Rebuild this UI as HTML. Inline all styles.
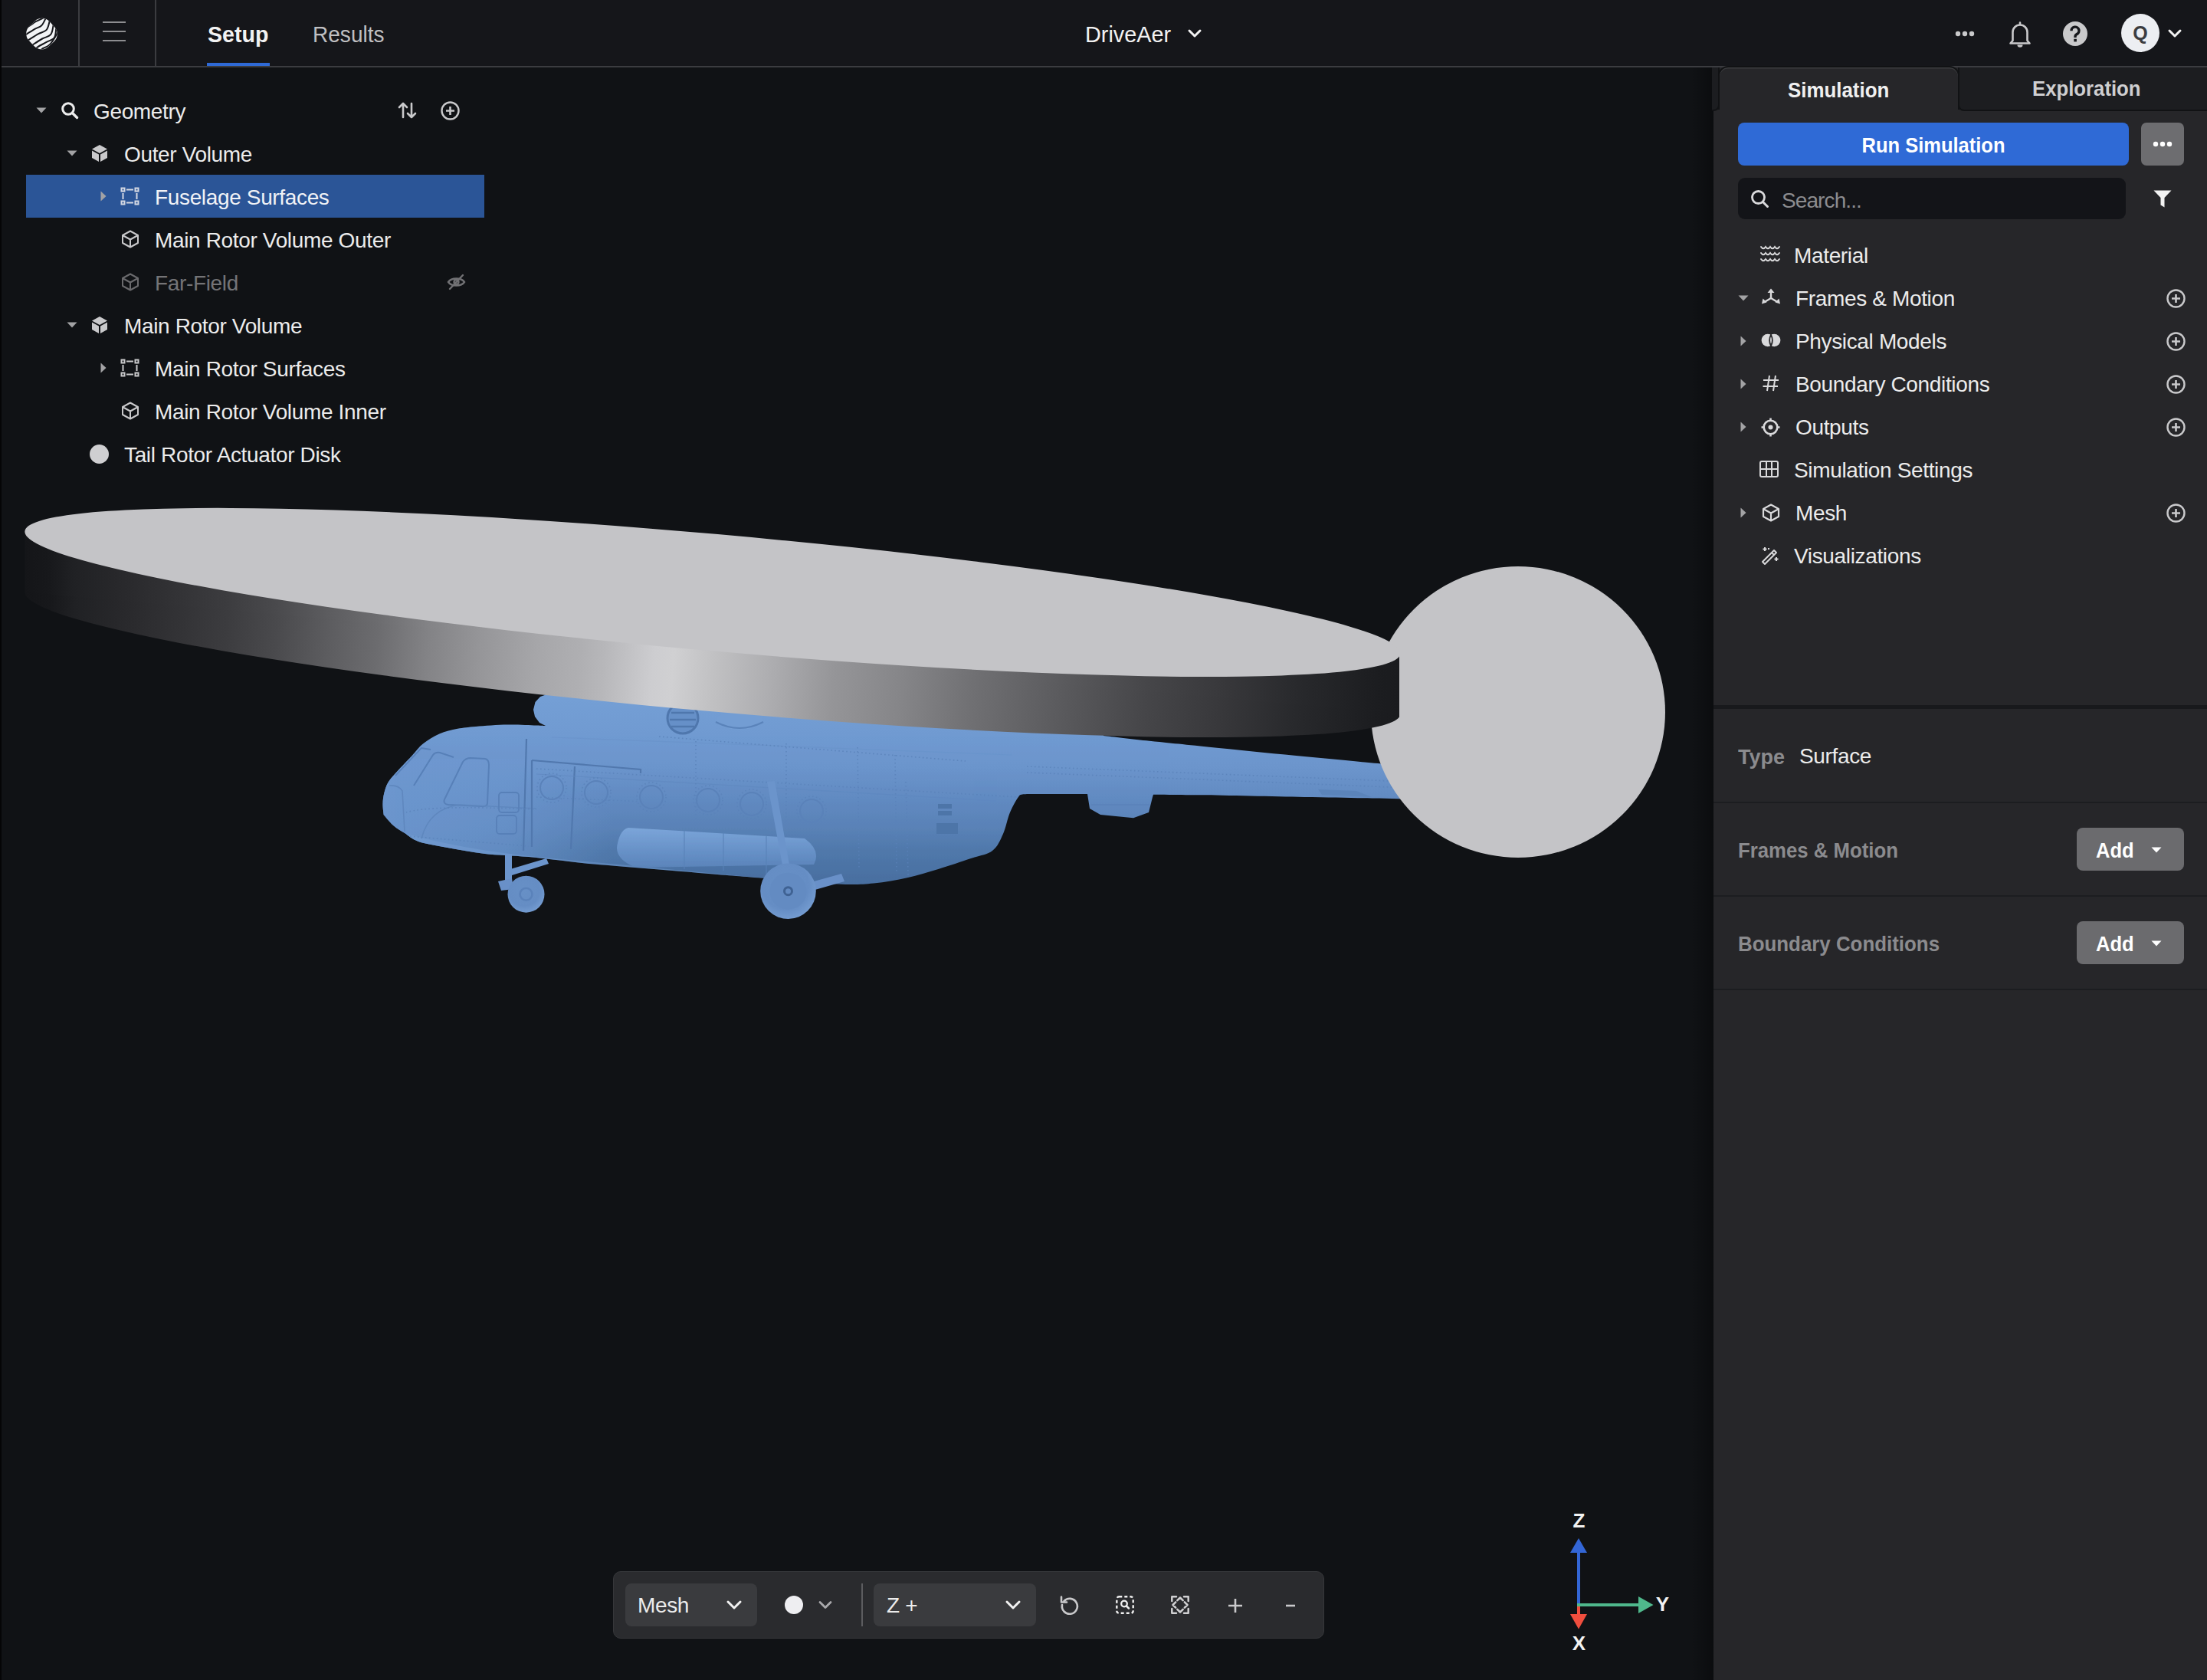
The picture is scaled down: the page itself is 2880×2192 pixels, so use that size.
<!DOCTYPE html>
<html><head><meta charset="utf-8">
<style>
*{box-sizing:border-box;margin:0;padding:0}
html,body{width:2880px;height:2192px;overflow:hidden;background:#101215;font-family:"Liberation Sans",sans-serif;color:#ececec}
.a{position:absolute}
.t{position:absolute;font-size:28px;line-height:56px;height:56px;white-space:nowrap;letter-spacing:-0.35px}
.b{font-weight:700;font-size:28px;letter-spacing:0;transform-origin:0 50%}
svg{overflow:visible}
</style></head><body>

<!-- ============ 3D SCENE ============ -->
<svg class="a" style="left:0;top:0" width="2236" height="2192" id="scene"><defs>
<linearGradient id="sideg" gradientUnits="userSpaceOnUse" x1="31" y1="0" x2="1826" y2="0"><stop offset="0.0000" stop-color="#141518"/><stop offset="0.0178" stop-color="#17181b"/><stop offset="0.0362" stop-color="#202124"/><stop offset="0.0730" stop-color="#29292c"/><stop offset="0.1097" stop-color="#323235"/><stop offset="0.1471" stop-color="#3c3c3f"/><stop offset="0.1838" stop-color="#4a4a4d"/><stop offset="0.2206" stop-color="#5c5c5f"/><stop offset="0.2574" stop-color="#6c6c6f"/><stop offset="0.2942" stop-color="#838386"/><stop offset="0.3309" stop-color="#959598"/><stop offset="0.3727" stop-color="#a6a6a9"/><stop offset="0.4050" stop-color="#afafb2"/><stop offset="0.4228" stop-color="#b7b7ba"/><stop offset="0.4585" stop-color="#cdcdd0"/><stop offset="0.4730" stop-color="#d0d0d2"/><stop offset="0.5036" stop-color="#c0c0c2"/><stop offset="0.5443" stop-color="#adadb0"/><stop offset="0.5900" stop-color="#959598"/><stop offset="0.6407" stop-color="#858588"/><stop offset="0.6914" stop-color="#707073"/><stop offset="0.7627" stop-color="#58585b"/><stop offset="0.8167" stop-color="#464649"/><stop offset="0.8719" stop-color="#38383b"/><stop offset="0.9270" stop-color="#28292c"/><stop offset="0.9827" stop-color="#1c1d20"/><stop offset="1.0000" stop-color="#1a1b1e"/></linearGradient>
<linearGradient id="helig" gradientUnits="userSpaceOnUse" x1="0" y1="900" x2="0" y2="1160"><stop offset="0" stop-color="#7ba4df"/><stop offset="0.55" stop-color="#6f99d6"/><stop offset="1" stop-color="#5b84c1"/></linearGradient>
<linearGradient id="wheelg" gradientUnits="userSpaceOnUse" x1="0" y1="1120" x2="0" y2="1200"><stop offset="0" stop-color="#6a93cf"/><stop offset="1" stop-color="#5880bd"/></linearGradient>
<clipPath id="diskclip"><rect x="0" y="0" width="1826" height="1200"/></clipPath>
</defs>
<defs>
<linearGradient id="hg" gradientUnits="userSpaceOnUse" x1="0" y1="900" x2="0" y2="1155">
<stop offset="0" stop-color="#75a0d6"/><stop offset="0.235" stop-color="#709ad1"/><stop offset="0.392" stop-color="#6c95cc"/><stop offset="0.549" stop-color="#628bc2"/><stop offset="0.706" stop-color="#5a82b7"/><stop offset="0.824" stop-color="#5079ab"/><stop offset="1" stop-color="#486e9f"/></linearGradient>
<linearGradient id="hgn" gradientUnits="userSpaceOnUse" x1="490" y1="0" x2="800" y2="0">
<stop offset="0" stop-color="#6e98d0" stop-opacity="1"/><stop offset="0.55" stop-color="#6e98d0" stop-opacity="0.7"/><stop offset="1" stop-color="#6e98d0" stop-opacity="0"/></linearGradient>
<linearGradient id="tankg" gradientUnits="userSpaceOnUse" x1="0" y1="1080" x2="0" y2="1135">
<stop offset="0" stop-color="#7ca5d9"/><stop offset="0.6" stop-color="#6690c6"/><stop offset="1" stop-color="#5a82b8"/></linearGradient>
<radialGradient id="wg" cx="0.45" cy="0.4" r="0.6"><stop offset="0" stop-color="#6790c6"/><stop offset="0.7" stop-color="#658dc4"/><stop offset="1" stop-color="#739bd0"/></radialGradient>
<clipPath id="hclip"><path d="M500.7 1063.3 C500.5 1060.9 499.4 1053.8 499.5 1049.0 C499.6 1044.2 500.1 1039.5 501.3 1034.8 C502.5 1030.0 503.8 1025.3 506.7 1020.5 C509.6 1015.7 513.5 1012.0 518.6 1006.2 C523.8 1000.5 532.1 992.0 537.6 986.0 C543.1 980.0 546.0 975.3 551.9 970.5 C557.8 965.7 565.8 960.7 573.3 957.4 C580.8 954.1 589.1 952.4 597.1 950.8 C605.1 949.2 610.1 948.8 621.0 947.9 C631.9 947.0 649.4 945.7 662.6 945.5 C675.8 945.3 691.8 946.2 700.0 946.5 C708.2 946.8 710.0 946.9 712.0 947.0 L704.0 943.0 L698.0 935.0 L696.0 926.0 L698.5 916.0 L705.0 909.0 L715.0 905.5 L730.0 902.0 L760.0 898.0 L1100.0 905.0 L1440.0 940.0 L1440.0 960.0 C1450.0 961.1 1479.0 964.6 1500.0 966.8 C1521.0 969.0 1536.8 970.4 1566.3 973.4 C1595.8 976.4 1638.1 980.7 1676.7 984.5 C1715.3 988.3 1768.8 993.4 1797.7 996.0 C1826.6 998.6 1841.3 999.3 1850.0 1000.0 L1850.0 1043.0 L1800.0 1041.6 C1783.7 1041.3 1741.2 1040.7 1702.2 1040.0 C1663.2 1039.3 1599.2 1037.8 1566.3 1037.3 C1533.4 1036.8 1515.2 1036.9 1505.0 1036.8 L1504.0 1040.0 L1499.0 1060.0 L1479.0 1067.2 L1436.0 1063.0 L1422.0 1055.0 L1419.0 1036.0 C1335.0 1036.5 1332.7 1034.7 1329.7 1038.7 C1326.7 1042.7 1321.5 1051.8 1318.0 1060.0 C1314.5 1068.2 1312.8 1079.7 1309.0 1088.0 C1305.2 1096.3 1302.0 1104.7 1295.0 1110.0 C1288.0 1115.3 1278.8 1116.0 1267.0 1120.0 C1255.2 1124.0 1238.2 1129.8 1224.4 1134.0 C1210.6 1138.2 1198.0 1142.1 1183.9 1145.2 C1169.8 1148.3 1155.2 1151.1 1140.0 1152.5 C1124.8 1153.9 1117.0 1154.7 1093.0 1153.6 C1069.0 1152.5 1025.9 1148.2 995.7 1145.7 C965.5 1143.2 948.5 1141.9 911.9 1138.9 C875.3 1135.9 813.0 1131.1 776.0 1127.6 C739.0 1124.1 713.9 1120.4 690.0 1118.1 C666.1 1115.8 650.4 1115.9 632.9 1113.9 C615.4 1111.9 599.7 1108.9 585.2 1106.2 C570.7 1103.5 555.5 1101.1 546.0 1097.9 C536.5 1094.7 533.5 1090.5 528.1 1087.1 C522.7 1083.7 518.4 1081.6 513.8 1077.6 C509.2 1073.6 502.9 1065.7 500.7 1063.3 Z"/></clipPath>
</defs>
<path d="M500.7 1063.3 C500.5 1060.9 499.4 1053.8 499.5 1049.0 C499.6 1044.2 500.1 1039.5 501.3 1034.8 C502.5 1030.0 503.8 1025.3 506.7 1020.5 C509.6 1015.7 513.5 1012.0 518.6 1006.2 C523.8 1000.5 532.1 992.0 537.6 986.0 C543.1 980.0 546.0 975.3 551.9 970.5 C557.8 965.7 565.8 960.7 573.3 957.4 C580.8 954.1 589.1 952.4 597.1 950.8 C605.1 949.2 610.1 948.8 621.0 947.9 C631.9 947.0 649.4 945.7 662.6 945.5 C675.8 945.3 691.8 946.2 700.0 946.5 C708.2 946.8 710.0 946.9 712.0 947.0 L704.0 943.0 L698.0 935.0 L696.0 926.0 L698.5 916.0 L705.0 909.0 L715.0 905.5 L730.0 902.0 L760.0 898.0 L1100.0 905.0 L1440.0 940.0 L1440.0 960.0 C1450.0 961.1 1479.0 964.6 1500.0 966.8 C1521.0 969.0 1536.8 970.4 1566.3 973.4 C1595.8 976.4 1638.1 980.7 1676.7 984.5 C1715.3 988.3 1768.8 993.4 1797.7 996.0 C1826.6 998.6 1841.3 999.3 1850.0 1000.0 L1850.0 1043.0 L1800.0 1041.6 C1783.7 1041.3 1741.2 1040.7 1702.2 1040.0 C1663.2 1039.3 1599.2 1037.8 1566.3 1037.3 C1533.4 1036.8 1515.2 1036.9 1505.0 1036.8 L1504.0 1040.0 L1499.0 1060.0 L1479.0 1067.2 L1436.0 1063.0 L1422.0 1055.0 L1419.0 1036.0 C1335.0 1036.5 1332.7 1034.7 1329.7 1038.7 C1326.7 1042.7 1321.5 1051.8 1318.0 1060.0 C1314.5 1068.2 1312.8 1079.7 1309.0 1088.0 C1305.2 1096.3 1302.0 1104.7 1295.0 1110.0 C1288.0 1115.3 1278.8 1116.0 1267.0 1120.0 C1255.2 1124.0 1238.2 1129.8 1224.4 1134.0 C1210.6 1138.2 1198.0 1142.1 1183.9 1145.2 C1169.8 1148.3 1155.2 1151.1 1140.0 1152.5 C1124.8 1153.9 1117.0 1154.7 1093.0 1153.6 C1069.0 1152.5 1025.9 1148.2 995.7 1145.7 C965.5 1143.2 948.5 1141.9 911.9 1138.9 C875.3 1135.9 813.0 1131.1 776.0 1127.6 C739.0 1124.1 713.9 1120.4 690.0 1118.1 C666.1 1115.8 650.4 1115.9 632.9 1113.9 C615.4 1111.9 599.7 1108.9 585.2 1106.2 C570.7 1103.5 555.5 1101.1 546.0 1097.9 C536.5 1094.7 533.5 1090.5 528.1 1087.1 C522.7 1083.7 518.4 1081.6 513.8 1077.6 C509.2 1073.6 502.9 1065.7 500.7 1063.3 Z" fill="url(#hg)"/>
<g clip-path="url(#hclip)">
<path d="M490 990 H800 V1130 H490 Z" fill="url(#hgn)" opacity="0.85"/>
<!-- underside highlight -->
<path d="M520 1085 Q600 1108 700 1118 L1000 1146 L1000 1156 L520 1110 Z" fill="#7ea7da" opacity="0.35"/>
<!-- fuel tank -->
<path d="M820 1080 L1050 1094 Q1072 1110 1062 1128 L830 1132 Q800 1120 806 1100 Q810 1082 820 1080 Z" fill="url(#tankg)"/>
<path d="M893 1082 V1134 M944 1086 V1136 M1000 1090 V1140" stroke="#5a82b8" stroke-width="1.5" opacity="0.7"/>
<!-- windows -->
<path d="M580 1043 L604 994 Q608 989 614 989 L633 990 Q638 991 638 998 L636 1048 Q636 1052 630 1052 L585 1050 Q578 1049 580 1043 Z" fill="none" stroke="#5880b8" stroke-width="2"/>
<path d="M540 1025 L565 985 Q568 981 574 982 L592 988" fill="none" stroke="#5880b8" stroke-width="2"/>
<path d="M516 1012 L550 976 L562 978" fill="none" stroke="#5880b8" stroke-width="1.8"/>
<path d="M508 1025 Q520 1024 525 1032 L528 1085" fill="none" stroke="#5f88bf" stroke-width="1.6"/>
<path d="M550 1094 Q560 1055 600 1050 L700 1055" fill="none" stroke="#5f88bf" stroke-width="1.6"/>
<!-- small hatches -->
<rect x="651" y="1034" width="26" height="26" rx="4" fill="none" stroke="#5880b8" stroke-width="1.8"/>
<rect x="648" y="1064" width="26" height="24" rx="4" fill="none" stroke="#5880b8" stroke-width="1.8"/>
<!-- door and panel lines -->
<path d="M687 964 L683 1110 M694 992 L694 1105 M694 992 L836 1004 L836 1009 M750 1000 L745 1108" fill="none" stroke="#5279ae" stroke-width="2.2"/>
<!-- portholes -->
<circle cx="720" cy="1028" r="15" fill="none" stroke="#5a82ba" stroke-width="2"/>
<circle cx="778" cy="1034" r="15" fill="none" stroke="#5a82ba" stroke-width="2"/>
<circle cx="850" cy="1040" r="15" fill="none" stroke="#5a82ba" stroke-width="2"/>
<circle cx="924" cy="1044" r="15" fill="none" stroke="#5a82ba" stroke-width="2"/>
<circle cx="981" cy="1049" r="15" fill="none" stroke="#5a82ba" stroke-width="2"/>
<circle cx="1059" cy="1058" r="15" fill="none" stroke="#5a82ba" stroke-width="2"/>
<!-- engine vent -->
<circle cx="891" cy="937" r="20" fill="#6690c8" stroke="#4f77ad" stroke-width="3"/>
<path d="M876 930 H906 M874 939 H908 M876 948 H906" stroke="#4f77ad" stroke-width="2.6"/>
<ellipse cx="965" cy="940" rx="31" ry="12" fill="#739dd3"/>
<path d="M934 942 Q965 958 996 942" fill="none" stroke="#5a83ba" stroke-width="2"/>
<!-- panel line along body -->
<path d="M700 1010 L1300 1045" stroke="#6089c0" stroke-width="1.2" opacity="0.7"/>
<path d="M720 962 L1320 985" stroke="#6a93ca" stroke-width="1.2" opacity="0.6"/>
<!-- rear grille -->
<path d="M1222 1074 h28 v14 h-28 z" fill="#4e76a8"/>
<path d="M1224 1049 h18 v6 h-18 z M1224 1058 h18 v6 h-18 z" fill="#4e76a8"/>
<!-- rivet seams -->
<g fill="none" stroke="#5a82b9" stroke-width="1.6" stroke-dasharray="1.6 3.4" opacity="0.8">
<path d="M700 1003 L1260 1036 L1330 1040"/>
<path d="M860 961 L1260 993"/>
<path d="M908 967 V1082 M1026 970 V1090 M1119 975 L1121 1135 M1168 985 L1170 1140 M1182 1020 L1185 1142"/>
<path d="M700 1040 L840 1046 M530 1060 Q560 1050 700 1056 M520 1090 L690 1104"/>
<path d="M1340 1000 L1840 1020 M1340 1008 L1840 1028"/>
<circle cx="720" cy="1028" r="19"/><circle cx="778" cy="1034" r="19"/><circle cx="850" cy="1040" r="19"/><circle cx="924" cy="1044" r="19"/><circle cx="981" cy="1049" r="19"/><circle cx="1059" cy="1058" r="19"/>
</g>
<!-- boom light stripe -->

<path d="M1720 1030 L1770 1032 L1790 1040 L1725 1037 Z" fill="#5b84ba"/>
</g>
<!-- nose gear -->
<path d="M659 1114 H668 V1160 H659 Z" fill="#6c95cc"/>
<path d="M666 1134 L713 1120 L716 1127 L668 1142 Z" fill="#6c95cc"/>
<path d="M650 1150 L668 1146 L670 1160 L654 1162 Z" fill="#6990c8"/>
<circle cx="686.5" cy="1166.7" r="24" fill="url(#wg)"/>
<circle cx="686.5" cy="1166.7" r="8" fill="none" stroke="#5a82ba" stroke-width="2.5"/>
<!-- main gear -->
<path d="M1001 1020 L1011 1019 L1030 1128 L1021 1129 Z" fill="#6b94cb"/>
<path d="M1055 1152 L1098 1140 L1102 1150 L1060 1162 Z" fill="#6990c8"/>
<circle cx="1028.5" cy="1162.7" r="36.3" fill="url(#wg)"/>
<circle cx="1028.5" cy="1162.7" r="24" fill="#638bc2"/>
<circle cx="1028.5" cy="1162.7" r="5" fill="none" stroke="#3f6293" stroke-width="3"/>
<!-- housing under boom -->
<path d="M1424 1050 L1500 1050" stroke="#5a82ba" stroke-width="1.5"/>

<ellipse cx="1981" cy="929" rx="192" ry="190" fill="#c4c4c7"/>
<g clip-path="url(#diskclip)">
<ellipse cx="929.97" cy="851.96" rx="901.12" ry="76.17" transform="rotate(5.080 929.97 851.96)" fill="url(#sideg)"/>
<path d="M32.4 693.8 L1827.6 852.3 L1827.6 931.3 L32.4 772.8 Z" fill="url(#sideg)"/>
<ellipse cx="929.97" cy="772.96" rx="901.12" ry="76.17" transform="rotate(5.080 929.97 772.96)" fill="#c4c4c7"/>
</g>
</svg>

<!-- ============ HEADER ============ -->
<div class="a" style="left:0;top:0;width:2880px;height:88px;background:#15161a;border-bottom:2px solid #3b3c40"></div>
<div class="a" style="left:102px;top:0;width:2px;height:86px;background:#3b3c40"></div>
<div class="a" style="left:202px;top:0;width:2px;height:86px;background:#3b3c40"></div>
<!-- logo -->
<svg class="a" style="left:33px;top:24px" width="42" height="40" viewBox="0 0 42 40" id="logo"><defs><clipPath id="lc"><rect x="3.2" y="1.8" width="36.6" height="36.6" rx="13.5" transform="rotate(47 21.5 20.1)"/></clipPath></defs>
<g clip-path="url(#lc)"><rect x="-5" y="-5" width="52" height="52" fill="#f2f3f5"/>
<g fill="none" stroke="#16171b" stroke-width="2" stroke-linecap="round"><path d="M0.0 13.0 C1.2 12.3 4.8 10.1 7.1 8.6 C9.4 7.1 11.1 5.6 13.6 4.2 C16.1 2.8 20.1 1.2 22.2 0.2 C24.3 -0.8 25.4 -1.6 26.0 -2.0"/><path d="M-2.0 23.0 C-1.3 22.6 -0.3 21.8 2.1 20.3 C4.5 18.8 9.2 15.6 12.3 13.8 C15.5 12.0 18.7 11.6 21.0 9.5 C23.3 7.4 25.0 3.2 26.0 1.1 C27.0 -1.0 26.8 -2.3 27.0 -3.0"/><path d="M1.0 30.0 C1.8 29.5 3.2 28.7 5.8 27.1 C8.4 25.5 13.1 22.3 16.7 20.3 C20.3 18.3 25.0 17.8 27.5 15.1 C30.0 12.4 30.8 6.9 31.5 4.2 C32.2 1.5 31.9 -0.1 32.0 -1.0"/><path d="M6.0 37.0 C6.8 36.5 7.8 35.6 10.5 33.9 C13.2 32.1 18.4 28.6 22.2 26.5 C26.0 24.4 30.7 24.0 33.1 21.2 C35.5 18.4 35.9 12.4 36.5 9.5 C37.1 6.6 36.9 4.9 37.0 4.0"/><path d="M12.0 41.0 C12.7 40.4 13.6 38.9 16.1 37.3 C18.6 35.7 23.6 33.2 27.2 31.2 C30.8 29.2 35.5 28.2 37.7 25.3 C39.9 22.4 39.7 16.7 40.2 13.8 C40.8 10.9 40.9 9.0 41.0 8.0"/><path d="M19.0 43.0 C19.6 42.4 20.7 40.7 22.9 39.2 C25.1 37.7 29.1 37.2 32.2 33.9 C35.3 30.6 39.9 22.7 41.7 19.4 C43.5 16.1 42.8 14.9 43.0 14.0"/></g></g></svg>
<!-- hamburger -->
<div class="a" style="left:134px;top:28px;width:30px;height:2px;background:#8d8d90"></div>
<div class="a" style="left:134px;top:40px;width:30px;height:2px;background:#8d8d90"></div>
<div class="a" style="left:134px;top:52px;width:30px;height:2px;background:#8d8d90"></div>
<!-- tabs -->
<div class="t b" style="left:271px;top:16.5px;font-size:30px;transform:scaleX(0.953);color:#f2f2f2">Setup</div>
<div class="a" style="left:270px;top:82px;width:82px;height:4px;background:#2f6ad6"></div>
<div class="t" style="left:408px;top:16.5px;font-size:30px;letter-spacing:0;transform:scaleX(0.935);transform-origin:0 50%;color:#bfbfc1">Results</div>
<!-- title -->
<div class="t" style="left:1416px;top:16.5px;font-size:30px;letter-spacing:0;transform:scaleX(0.96);transform-origin:0 50%;color:#f2f2f2">DriveAer</div>

<svg class="a" style="left:1548px;top:36px" width="22" height="16" viewBox="0 0 22 16"><path d="M4 4 L11 11 L18 4" fill="none" stroke="#f2f2f2" stroke-width="3" stroke-linecap="round" stroke-linejoin="round"/></svg>
<!-- right header icons -->
<svg class="a" style="left:2548px;top:36px" width="32" height="16"><circle cx="7" cy="8" r="3.2" fill="#c9c9cb"/><circle cx="16" cy="8" r="3.2" fill="#c9c9cb"/><circle cx="25" cy="8" r="3.2" fill="#c9c9cb"/></svg>
<svg class="a" style="left:2620px;top:27px" width="32" height="35" viewBox="0 0 32 35"><path d="M16 2.5 v2.5 M6.5 26 V15 a9.5 9.5 0 0 1 19 0 V26 l3 3.5 H3.5 z" fill="none" stroke="#c9c9cb" stroke-width="2.6" stroke-linejoin="round" stroke-linecap="round"/><path d="M12.5 31.5 a3.5 3.2 0 0 0 7 0 z" fill="#c9c9cb"/></svg>
<svg class="a" style="left:2692px;top:28px" width="32" height="32" viewBox="0 0 32 32"><circle cx="16" cy="16" r="16" fill="#c9c9cb"/><path d="M11 12.2 a5 5 0 1 1 7.2 4.4 c-1.6 0.9-2.2 1.6-2.2 3.4 v1" fill="none" stroke="#16171b" stroke-width="3.4"/><rect x="14.3" y="22.8" width="3.6" height="3.6" fill="#16171b"/></svg>
<div class="a" style="left:2768px;top:18px;width:50px;height:50px;border-radius:50%;background:#eceef2"></div>
<div class="a" style="left:2768px;top:18px;width:50px;height:50px;line-height:50px;text-align:center;font-weight:700;font-size:25px;color:#3b3c40">Q</div>
<svg class="a" style="left:2827px;top:35px" width="22" height="18" viewBox="0 0 22 18"><path d="M4 5 L11 12 L18 5" fill="none" stroke="#f2f2f2" stroke-width="3" stroke-linecap="round" stroke-linejoin="round"/></svg>

<!-- ============ LEFT TREE ============ -->
<div class="a" style="left:34px;top:228px;width:598px;height:56px;background:#2b5597"></div>
<svg class="a" style="left:47px;top:139px" width="14" height="10" viewBox="0 0 14 10"><path d="M0.5 1.5 H13.5 L7 8.5 Z" fill="#a3a3a5"/></svg>
<svg class="a" style="left:79px;top:132px" width="24" height="24" viewBox="0 0 24 24"><circle cx="10" cy="10" r="7.3" fill="none" stroke="#ececec" stroke-width="3"/><path d="M15.5 15.5 L21.5 21.5" stroke="#ececec" stroke-width="3.4" stroke-linecap="round"/></svg>
<div class="t" style="left:122px;top:118px;color:#ececec;">Geometry</div>
<svg class="a" style="left:519px;top:132px" width="25" height="24" viewBox="0 0 25 24"><g fill="none" stroke="#c9c9cb" stroke-width="2.6" stroke-linecap="round" stroke-linejoin="round"><path d="M7 21 V3 M2 8 L7 3 L12 8"/><path d="M18 3 V21 M13 16 L18 21 L23 16"/></g></svg>
<svg class="a" style="left:575px;top:131.5px" width="25" height="25" viewBox="0 0 25 25"><circle cx="12.5" cy="12.5" r="11" fill="none" stroke="#c9c9cb" stroke-width="2.4"/><path d="M12.5 7 V18 M7 12.5 H18" stroke="#c9c9cb" stroke-width="2.6"/></svg>
<svg class="a" style="left:87px;top:195px" width="14" height="10" viewBox="0 0 14 10"><path d="M0.5 1.5 H13.5 L7 8.5 Z" fill="#a3a3a5"/></svg>
<svg class="a" style="left:119px;top:188px" width="22" height="24" viewBox="0 0 22 24"><path d="M11 1 L21 6.5 L11 12 L1 6.5 Z" fill="#c9c9cb"/><path d="M1 8.5 L10 13.5 V23 L1 18 Z" fill="#c9c9cb"/><path d="M21 8.5 L12 13.5 V23 L21 18 Z" fill="#c9c9cb"/></svg>
<div class="t" style="left:162px;top:174px;color:#ececec;">Outer Volume</div>
<svg class="a" style="left:130px;top:249px" width="10" height="14" viewBox="0 0 10 14"><path d="M1.5 0.5 V13.5 L8.5 7 Z" fill="#a3a3a5"/></svg>
<svg class="a" style="left:157px;top:244px" width="25" height="24" viewBox="0 0 25 24"><g fill="none" stroke="#d5d9e3" stroke-width="2"><rect x="1.5" y="1.5" width="4" height="4"/><rect x="19.5" y="1.5" width="4" height="4"/><rect x="1.5" y="18.5" width="4" height="4"/><rect x="19.5" y="18.5" width="4" height="4"/><path d="M8 3.5 H17 M8 20.5 H17 M3.5 8 V16 M21.5 8 V16"/></g></svg>
<div class="t" style="left:202px;top:230px;color:#f0f2f6;">Fuselage Surfaces</div>
<svg class="a" style="left:158px;top:300px" width="24" height="24" viewBox="0 0 24 24"><path d="M12 1.5 L22 7 V17 L12 22.5 L2 17 V7 Z M2 7 L12 12.5 L22 7 M12 12.5 V22.5" fill="none" stroke="#c9c9cb" stroke-width="2" stroke-linejoin="round"/></svg>
<div class="t" style="left:202px;top:286px;color:#ececec;">Main Rotor Volume Outer</div>
<svg class="a" style="left:158px;top:356px" width="24" height="24" viewBox="0 0 24 24"><path d="M12 1.5 L22 7 V17 L12 22.5 L2 17 V7 Z M2 7 L12 12.5 L22 7 M12 12.5 V22.5" fill="none" stroke="#6a6a6d" stroke-width="2" stroke-linejoin="round"/></svg>
<div class="t" style="left:202px;top:342px;color:#747477;">Far-Field</div>
<svg class="a" style="left:583px;top:356px" width="25" height="24" viewBox="0 0 25 24"><g fill="none" stroke="#717174" stroke-width="2.4" stroke-linecap="round"><path d="M2 12 C6 6,19 6,23 12 C19 18,6 18,2 12 Z"/><circle cx="12.5" cy="12" r="3"/><path d="M4 21 L21 3"/></g></svg>
<svg class="a" style="left:87px;top:419px" width="14" height="10" viewBox="0 0 14 10"><path d="M0.5 1.5 H13.5 L7 8.5 Z" fill="#a3a3a5"/></svg>
<svg class="a" style="left:119px;top:412px" width="22" height="24" viewBox="0 0 22 24"><path d="M11 1 L21 6.5 L11 12 L1 6.5 Z" fill="#c9c9cb"/><path d="M1 8.5 L10 13.5 V23 L1 18 Z" fill="#c9c9cb"/><path d="M21 8.5 L12 13.5 V23 L21 18 Z" fill="#c9c9cb"/></svg>
<div class="t" style="left:162px;top:398px;color:#ececec;">Main Rotor Volume</div>
<svg class="a" style="left:130px;top:473px" width="10" height="14" viewBox="0 0 10 14"><path d="M1.5 0.5 V13.5 L8.5 7 Z" fill="#a3a3a5"/></svg>
<svg class="a" style="left:157px;top:468px" width="25" height="24" viewBox="0 0 25 24"><g fill="none" stroke="#c9c9cb" stroke-width="2"><rect x="1.5" y="1.5" width="4" height="4"/><rect x="19.5" y="1.5" width="4" height="4"/><rect x="1.5" y="18.5" width="4" height="4"/><rect x="19.5" y="18.5" width="4" height="4"/><path d="M8 3.5 H17 M8 20.5 H17 M3.5 8 V16 M21.5 8 V16"/></g></svg>
<div class="t" style="left:202px;top:454px;color:#ececec;">Main Rotor Surfaces</div>
<svg class="a" style="left:158px;top:524px" width="24" height="24" viewBox="0 0 24 24"><path d="M12 1.5 L22 7 V17 L12 22.5 L2 17 V7 Z M2 7 L12 12.5 L22 7 M12 12.5 V22.5" fill="none" stroke="#c9c9cb" stroke-width="2" stroke-linejoin="round"/></svg>
<div class="t" style="left:202px;top:510px;color:#ececec;">Main Rotor Volume Inner</div>
<div class="a" style="left:117px;top:579.5px;width:25px;height:25px;border-radius:50%;background:#cfcfd1"></div>
<div class="t" style="left:162px;top:566px;color:#ececec;">Tail Rotor Actuator Disk</div>
<!-- ============ RIGHT PANEL ============ -->
<div class="a" style="left:2206px;top:88px;width:30px;height:2104px;background:linear-gradient(90deg,rgba(0,0,0,0),rgba(0,0,0,0.18) 60%,rgba(0,0,0,0.32))"></div>
<div class="a" style="left:2236px;top:88px;width:644px;height:2104px;background:#262629"></div>
<div class="a" style="left:2234px;top:88px;width:10px;height:57px;background:#1c1d20;border:2px solid #111214;border-left:none;border-top:none;border-radius:0 0 8px 0"></div>
<div class="a" style="left:2555px;top:88px;width:330px;height:57px;background:#1c1d20;border:2px solid #111214;border-right:none;border-top:none;border-radius:0 0 0 8px"></div>
<div class="a" style="left:2242px;top:86px;width:315px;height:57px;background:#262629;border:2px solid #111214;border-bottom:none;border-radius:13px 13px 0 0;box-shadow:inset 0 1.5px 0 #3c3d40"></div>
<div class="t b" style="left:2333px;top:90px;transform:scaleX(0.924);color:#f0f0f0;">Simulation</div>
<div class="t b" style="left:2652px;top:88px;transform:scaleX(0.919);color:#cfcfd1;">Exploration</div>
<div class="a" style="left:2268px;top:160px;width:510px;height:56px;background:#2f6ad6;border-radius:8px"></div>
<div class="t b" style="left:2268px;top:162px;width:510px;text-align:center;transform:scaleX(0.911);transform-origin:50% 50%;color:#ffffff">Run Simulation</div>
<div class="a" style="left:2794px;top:160px;width:56px;height:56px;background:#6d6d70;border-radius:7px"></div>
<svg class="a" style="left:2794px;top:160px" width="56" height="56"><circle cx="19" cy="28" r="3.2" fill="#fff"/><circle cx="28" cy="28" r="3.2" fill="#fff"/><circle cx="37" cy="28" r="3.2" fill="#fff"/></svg>
<div class="a" style="left:2268px;top:232px;width:506px;height:54px;background:#131418;border-radius:9px"></div>
<svg class="a" style="left:2284px;top:247px" width="25" height="25" viewBox="0 0 25 25"><circle cx="10.5" cy="10.5" r="8" fill="none" stroke="#d9d9db" stroke-width="2.8"/><path d="M16.5 16.5 L22.5 22.5" stroke="#d9d9db" stroke-width="3" stroke-linecap="round"/></svg>
<div class="t" style="left:2325px;top:234px;color:#8c8c8f;letter-spacing:-0.9px">Search...</div>
<svg class="a" style="left:2810px;top:248px" width="24" height="23" viewBox="0 0 24 23"><path d="M0.5 0.5 H23.5 L14.5 10 V22.5 L9.5 19.5 V10 Z" fill="#f2f2f2"/></svg>
<svg class="a" style="left:2296px;top:320px" width="26" height="24" viewBox="0 0 26 24"><g fill="none" stroke="#d9d9db" stroke-width="2" stroke-linecap="round"><path d="M2 2 q3 4.5 6 0 q3 4.5 6 0 q3 4.5 6 0 q3 4.5 6 0"/><path d="M2 10 q3 4.5 6 0 q3 4.5 6 0 q3 4.5 6 0 q3 4.5 6 0"/><path d="M2 18 q3 4.5 6 0 q3 4.5 6 0 q3 4.5 6 0 q3 4.5 6 0"/></g></svg>
<div class="t" style="left:2341px;top:306px;color:#ececec;">Material</div>
<svg class="a" style="left:2268px;top:384px" width="14" height="10" viewBox="0 0 14 10"><path d="M0.5 1.5 H13.5 L7 8.5 Z" fill="#a3a3a5"/></svg>
<svg class="a" style="left:2298px;top:375px" width="26" height="26" viewBox="0 0 26 26"><g stroke="#d9d9db" stroke-width="2.4"><path d="M13 14 V6"/><path d="M13 14 L5.5 18.5"/><path d="M13 14 L20.5 18.5"/></g><g fill="#d9d9db"><path d="M8.5 7 L13 1.5 L17.5 7 Z"/><path d="M1 21.5 L2.5 14.5 L7.5 19.5 Z"/><path d="M25 21.5 L23.5 14.5 L18.5 19.5 Z"/></g></svg>
<div class="t" style="left:2343px;top:362px;color:#ececec;">Frames &amp; Motion</div>
<svg class="a" style="left:2827px;top:376.5px" width="25" height="25" viewBox="0 0 25 25"><circle cx="12.5" cy="12.5" r="11" fill="none" stroke="#c9c9cb" stroke-width="2.4"/><path d="M12.5 7 V18 M7 12.5 H18" stroke="#c9c9cb" stroke-width="2.6"/></svg>
<svg class="a" style="left:2270px;top:438px" width="10" height="14" viewBox="0 0 10 14"><path d="M1.5 0.5 V13.5 L8.5 7 Z" fill="#a3a3a5"/></svg>
<svg class="a" style="left:2298px;top:435px" width="26" height="18" viewBox="0 0 26 18"><circle cx="8.8" cy="9" r="8.2" fill="#d9d9db"/><circle cx="17.2" cy="9" r="8.2" fill="#d9d9db"/><path d="M13 1.8 Q9.2 9 13 16.2 Q16.8 9 13 1.8 Z" fill="#d9d9db" stroke="#262629" stroke-width="1.8"/></svg>
<div class="t" style="left:2343px;top:418px;color:#ececec;">Physical Models</div>
<svg class="a" style="left:2827px;top:432.5px" width="25" height="25" viewBox="0 0 25 25"><circle cx="12.5" cy="12.5" r="11" fill="none" stroke="#c9c9cb" stroke-width="2.4"/><path d="M12.5 7 V18 M7 12.5 H18" stroke="#c9c9cb" stroke-width="2.6"/></svg>
<svg class="a" style="left:2270px;top:494px" width="10" height="14" viewBox="0 0 10 14"><path d="M1.5 0.5 V13.5 L8.5 7 Z" fill="#a3a3a5"/></svg>
<svg class="a" style="left:2300px;top:489px" width="22" height="22" viewBox="0 0 22 22"><g stroke="#d9d9db" stroke-width="2"><path d="M9 1 L6 21 M17 1 L14 21 M1 7 H21 M0.5 15 H20"/></g></svg>
<div class="t" style="left:2343px;top:474px;color:#ececec;">Boundary Conditions</div>
<svg class="a" style="left:2827px;top:488.5px" width="25" height="25" viewBox="0 0 25 25"><circle cx="12.5" cy="12.5" r="11" fill="none" stroke="#c9c9cb" stroke-width="2.4"/><path d="M12.5 7 V18 M7 12.5 H18" stroke="#c9c9cb" stroke-width="2.6"/></svg>
<svg class="a" style="left:2270px;top:550px" width="10" height="14" viewBox="0 0 10 14"><path d="M1.5 0.5 V13.5 L8.5 7 Z" fill="#a3a3a5"/></svg>
<svg class="a" style="left:2298px;top:545px" width="25" height="25" viewBox="0 0 25 25"><circle cx="12.5" cy="12.5" r="8.8" fill="none" stroke="#d9d9db" stroke-width="2.6"/><circle cx="12.5" cy="12.5" r="3" fill="#d9d9db"/><path d="M12.5 0.5 V4 M12.5 21 V24.5 M0.5 12.5 H4 M21 12.5 H24.5" stroke="#d9d9db" stroke-width="2.6"/></svg>
<div class="t" style="left:2343px;top:530px;color:#ececec;">Outputs</div>
<svg class="a" style="left:2827px;top:544.5px" width="25" height="25" viewBox="0 0 25 25"><circle cx="12.5" cy="12.5" r="11" fill="none" stroke="#c9c9cb" stroke-width="2.4"/><path d="M12.5 7 V18 M7 12.5 H18" stroke="#c9c9cb" stroke-width="2.6"/></svg>
<svg class="a" style="left:2296px;top:601px" width="25" height="22" viewBox="0 0 25 22"><g fill="none" stroke="#d9d9db" stroke-width="2"><rect x="1" y="1" width="23" height="20" rx="2"/><path d="M1 11 H24 M9 1 V21 M16 1 V21"/></g></svg>
<div class="t" style="left:2341px;top:586px;color:#ececec;">Simulation Settings</div>
<svg class="a" style="left:2270px;top:662px" width="10" height="14" viewBox="0 0 10 14"><path d="M1.5 0.5 V13.5 L8.5 7 Z" fill="#a3a3a5"/></svg>
<svg class="a" style="left:2299px;top:657px" width="24" height="24" viewBox="0 0 24 24"><path d="M12 1.5 L22 7 V17 L12 22.5 L2 17 V7 Z M2 7 L12 12.5 L22 7 M12 12.5 V22.5" fill="none" stroke="#d9d9db" stroke-width="2.2" stroke-linejoin="round"/></svg>
<div class="t" style="left:2343px;top:642px;color:#ececec;">Mesh</div>
<svg class="a" style="left:2827px;top:656.5px" width="25" height="25" viewBox="0 0 25 25"><circle cx="12.5" cy="12.5" r="11" fill="none" stroke="#c9c9cb" stroke-width="2.4"/><path d="M12.5 7 V18 M7 12.5 H18" stroke="#c9c9cb" stroke-width="2.6"/></svg>
<svg class="a" style="left:2298px;top:713px" width="24" height="24" viewBox="0 0 24 24"><g fill="none" stroke="#d9d9db" stroke-width="2" stroke-linejoin="round"><path d="M2 20 L17 5 L20 8 L5 23 Z M14 8 L17 11"/><path d="M5 1 V6 M2.5 3.5 H7.5 M20 14 V19 M17.5 16.5 H22.5 M10 2 V4 M9 3 H11"/></g></svg>
<div class="t" style="left:2341px;top:698px;color:#ececec;">Visualizations</div>
<div class="a" style="left:2236px;top:920px;width:644px;height:5px;background:#18191c"></div>
<div class="t b" style="left:2268px;top:960px;transform:scaleX(0.964);color:#8b8b8e;">Type</div>
<div class="t" style="left:2348px;top:959px;color:#ececec;">Surface</div>
<div class="a" style="left:2236px;top:1046px;width:644px;height:2px;background:#1c1d20"></div>
<div class="t b" style="left:2268px;top:1082px;transform:scaleX(0.92);color:#8b8b8e;">Frames &amp; Motion</div>
<div class="a" style="left:2710px;top:1080px;width:140px;height:56px;background:#6b6b6e;border-radius:8px"></div>
<div class="t b" style="left:2735px;top:1082px;transform:scaleX(0.911);color:#ffffff;">Add</div>
<svg class="a" style="left:2807px;top:1104px" width="14" height="10" viewBox="0 0 14 10"><path d="M0.5 1.5 H13.5 L7 8.5 Z" fill="#ffffff"/></svg>
<div class="a" style="left:2236px;top:1168px;width:644px;height:2px;background:#1c1d20"></div>
<div class="t b" style="left:2268px;top:1204px;transform:scaleX(0.924);color:#8b8b8e;">Boundary Conditions</div>
<div class="a" style="left:2710px;top:1202px;width:140px;height:56px;background:#6b6b6e;border-radius:8px"></div>
<div class="t b" style="left:2735px;top:1204px;transform:scaleX(0.911);color:#ffffff;">Add</div>
<svg class="a" style="left:2807px;top:1226px" width="14" height="10" viewBox="0 0 14 10"><path d="M0.5 1.5 H13.5 L7 8.5 Z" fill="#ffffff"/></svg>
<div class="a" style="left:2236px;top:1290px;width:644px;height:2px;background:#1c1d20"></div>
<!-- ============ TOOLBAR ============ -->
<div class="a" style="left:800px;top:2050px;width:928px;height:88px;background:#2a2b2e;border-radius:10px;border:1.5px solid #36373a"></div>
<div class="a" style="left:816px;top:2066px;width:172px;height:56px;background:#3a3b3e;border-radius:8px"></div>
<div class="t" style="left:832px;top:2067px;color:#ececec;">Mesh</div>
<svg class="a" style="left:947px;top:2086px" width="22" height="16" viewBox="0 0 22 16"><path d="M3 4 L11 12 L19 4" fill="none" stroke="#f2f2f2" stroke-width="3" stroke-linecap="round" stroke-linejoin="round"/></svg>
<div class="a" style="left:1024px;top:2082px;width:24px;height:24px;border-radius:50%;background:#eeeef1"></div>
<svg class="a" style="left:1067px;top:2087px" width="20" height="14" viewBox="0 0 20 14"><path d="M3 3.5 L10 10.5 L17 3.5" fill="none" stroke="#a9a9ac" stroke-width="2.8" stroke-linecap="round" stroke-linejoin="round"/></svg>
<div class="a" style="left:1124px;top:2066px;width:2px;height:56px;background:#5c5c5f"></div>
<div class="a" style="left:1140px;top:2066px;width:212px;height:56px;background:#3a3b3e;border-radius:8px"></div>
<div class="t" style="left:1157px;top:2067px;color:#ececec;">Z +</div>
<svg class="a" style="left:1311px;top:2086px" width="22" height="16" viewBox="0 0 22 16"><path d="M3 4 L11 12 L19 4" fill="none" stroke="#f2f2f2" stroke-width="3" stroke-linecap="round" stroke-linejoin="round"/></svg>
<svg class="a" style="left:1383px;top:2081px" width="26" height="26" viewBox="0 0 26 26"><path d="M5.5 8 A10 10 0 1 1 3 13" fill="none" stroke="#c9c9cb" stroke-width="2.6" stroke-linecap="round"/><path d="M2 2.5 V9.5 H9" fill="none" stroke="#c9c9cb" stroke-width="2.6" stroke-linecap="round" stroke-linejoin="round"/></svg>
<svg class="a" style="left:1456px;top:2082px" width="24" height="24" viewBox="0 0 24 24"><rect x="1.3" y="1.3" width="21.4" height="21.4" rx="3" fill="none" stroke="#f0f0f0" stroke-width="2.4" stroke-dasharray="4 3"/><circle cx="11" cy="10.5" r="3.8" fill="none" stroke="#f0f0f0" stroke-width="2.3"/><path d="M13.8 13.3 L17 16.5" stroke="#f0f0f0" stroke-width="2.5" stroke-linecap="round"/></svg>
<svg class="a" style="left:1528px;top:2082px" width="24" height="24" viewBox="0 0 24 24"><g fill="none" stroke="#d0d0d2" stroke-width="2.5" stroke-linecap="round" stroke-linejoin="round"><path d="M1.3 7 V1.3 H7 M17 1.3 H22.7 V7 M22.7 17 V22.7 H17 M7 22.7 H1.3 V17"/><path d="M8.3 6.2 L12 2.5 L15.7 6.2 M17.8 8.3 L21.5 12 L17.8 15.7 M15.7 17.8 L12 21.5 L8.3 17.8 M6.2 15.7 L2.5 12 L6.2 8.3"/></g></svg>
<svg class="a" style="left:1602px;top:2085px" width="20" height="20" viewBox="0 0 20 20"><path d="M10 1 V19 M1 10 H19" stroke="#c9c9cb" stroke-width="2.6"/></svg>
<svg class="a" style="left:1677px;top:2085px" width="14" height="20" viewBox="0 0 14 20"><path d="M1 10 H13" stroke="#c9c9cb" stroke-width="2.6"/></svg>
<!-- ============ AXES ============ -->
<svg class="a" style="left:2040px;top:1960px" width="160" height="210" viewBox="2040 1960 160 210">
<path d="M2060 2025 V2096" stroke="#3366d6" stroke-width="4"/>
<path d="M2049 2026 L2060 2007 L2071 2026 Z" fill="#3366d6"/>
<path d="M2058 2094 H2139" stroke="#4fb88c" stroke-width="4"/>
<path d="M2138 2083 L2157.5 2094 L2138 2105 Z" fill="#4fb88c"/>
<path d="M2060 2096 V2107" stroke="#f04e3e" stroke-width="4"/>
<path d="M2049 2106 L2060 2125.5 L2071 2106 Z" fill="#f04e3e"/>
</svg>
<div class="a" style="left:2043px;top:1967px;width:35px;text-align:center;font-size:26px;font-weight:700;line-height:34px;color:#f2f2f2">Z</div>
<div class="a" style="left:2043px;top:2127px;width:35px;text-align:center;font-size:26px;font-weight:700;line-height:34px;color:#f2f2f2">X</div>
<div class="a" style="left:2152px;top:2076px;width:35px;text-align:center;font-size:26px;font-weight:700;line-height:34px;color:#f2f2f2">Y</div>
<div class="a" style="left:0;top:0;width:2px;height:2192px;background:#050506"></div>
</body></html>
